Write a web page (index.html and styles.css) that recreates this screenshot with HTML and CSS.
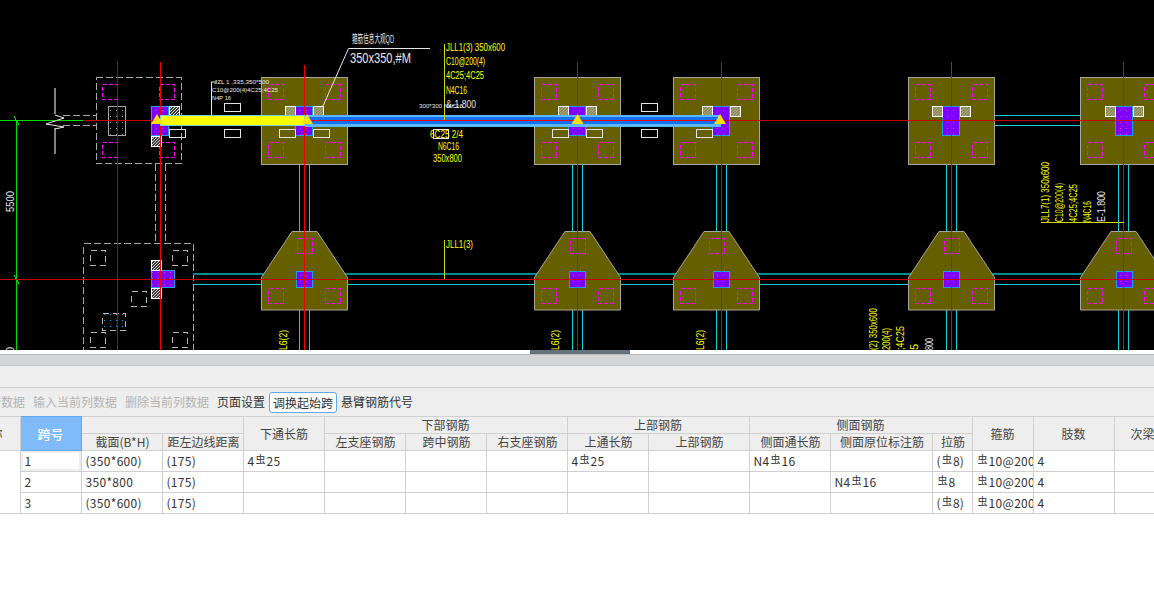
FILE: index.html
```html
<!DOCTYPE html>
<html lang="zh-CN">
<head>
<meta charset="utf-8">
<title>梁平法表格</title>
<link rel="stylesheet" href="styles.css">
</head>
<body>
<div class="cad">
<svg class="cad-svg" width="1154" height="350" viewBox="0 0 1154 350" xmlns="http://www.w3.org/2000/svg">
  <defs>
    <pattern id="hatch" width="3" height="3" patternUnits="userSpaceOnUse">
      <rect width="3" height="3" fill="#3a3a3a"/>
      <path d="M0 3L3 0" stroke="#d8d8d8" stroke-width="1"/>
    </pattern>
    <pattern id="hatchOlive" width="3" height="3" patternUnits="userSpaceOnUse">
      <rect width="3" height="3" fill="#77723a"/>
      <path d="M0 3L3 0" stroke="#dcdcc0" stroke-width="1"/>
    </pattern>
    <pattern id="dots" width="6" height="6" patternUnits="userSpaceOnUse">
      <rect width="6" height="6" fill="#8000ff"/>
      <rect x="2" y="2" width="1" height="1" fill="#d040e0"/>
    </pattern>
    <pattern id="grayDots" width="6" height="6" patternUnits="userSpaceOnUse">
      <rect x="2" y="2" width="1" height="1" fill="#a8a8a8"/>
    </pattern>
    <pattern id="cyanDots" width="6" height="6" patternUnits="userSpaceOnUse">
      <rect x="2" y="2" width="1" height="1" fill="#00a8e0"/>
    </pattern>
    <g id="piles4">
      <rect class="pile" x="-35.5" y="-35.5" width="15" height="15"/>
      <rect class="pile" x="21.5" y="-35.5" width="15" height="15"/>
      <rect class="pile" x="-35.5" y="22.5" width="15" height="15"/>
      <rect class="pile" x="21.5" y="22.5" width="15" height="15"/>
    </g>
    <g id="footSquare">
      <rect class="foot" x="-42.5" y="-42.5" width="86" height="87"/>
      <use href="#piles4"/>
    </g>
    <g id="footTrap">
      <polygon class="foot" points="-12,-47.5 13,-47.5 43.5,-1.5 43.5,31 -42.5,31 -42.5,-1.5"/>
      <rect class="pile" x="-6.5" y="-40.5" width="15" height="15"/>
      <rect class="pile" x="-35.5" y="9.5" width="15" height="15"/>
      <rect class="pile" x="21.5" y="9.5" width="15" height="15"/>
    </g>
    <g id="colSmall">
      <rect class="col" x="-7.5" y="-7.5" width="16" height="16" fill="url(#dots)"/>
    </g>
    <g id="colT">
      <rect class="col" x="-8.5" y="-13.5" width="17" height="29" fill="url(#dots)"/>
    </g>
    <g id="hatchPair">
      <rect class="hatch" x="-19" y="-14" width="10" height="10" fill="url(#hatchOlive)"/>
      <rect class="hatch" x="9" y="-14" width="10" height="10" fill="url(#hatchOlive)"/>
    </g>
    <polygon id="tri" class="tri" points="0,-6 6,4 -6,4"/>
  </defs>

  <!-- grid axes -->
  <line class="green" x1="0" y1="120.5" x2="83" y2="120.5"/>
  <line class="green" x1="16.5" y1="120" x2="16.5" y2="350"/>
  <line class="green" x1="13" y1="279.5" x2="94" y2="279.5"/>
  <line class="green" x1="14" y1="116.5" x2="19" y2="124.5"/>
  <line class="green" x1="14" y1="275.5" x2="19" y2="283.5"/>

  <!-- break symbol -->
  <line class="gray" x1="54.5" y1="88" x2="54.5" y2="114"/>
  <line class="gray" x1="54.5" y1="128" x2="54.5" y2="154"/>
  <polyline class="white" points="55,115 64,118 46,124 64,127 55,129"/>
  <line class="ghost" x1="63" y1="115.5" x2="96" y2="115.5"/>
  <line class="ghost" x1="63" y1="125.5" x2="96" y2="125.5"/>

  <!-- ghost footing, upper -->
  <rect class="ghost" x="96" y="77.5" width="85" height="86"/>
  <use href="#piles4" x="138" y="120"/>
  <rect class="thin" x="108.5" y="106.5" width="17" height="29"/>
  <rect x="108" y="106" width="17" height="29" fill="url(#grayDots)"/>
  <line class="ghost" x1="155.5" y1="164" x2="155.5" y2="243"/>
  <line class="ghost" x1="165.5" y1="164" x2="165.5" y2="243"/>

  <!-- ghost footing, lower -->
  <rect class="ghost" x="83.5" y="243.5" width="110" height="120"/>
  <rect class="bracket" x="90.5" y="250.5" width="15" height="15"/>
  <rect class="bracket" x="172.5" y="250.5" width="15" height="15"/>
  <rect class="bracket" x="90.5" y="332.5" width="15" height="15"/>
  <rect class="bracket" x="172.5" y="332.5" width="15" height="15"/>
  <rect class="bracket" x="131.5" y="291.5" width="15" height="15"/>
  <rect class="bracket" x="102.5" y="313.5" width="23" height="17"/>
  <rect x="103" y="314" width="22" height="16" fill="url(#cyanDots)"/>

  <!-- beams -->
  <g class="beam">
    <line x1="299.5" y1="164" x2="299.5" y2="350"/><line x1="309.5" y1="164" x2="309.5" y2="350"/>
    <line x1="572.5" y1="164" x2="572.5" y2="350"/><line x1="582.5" y1="164" x2="582.5" y2="350"/>
    <line x1="716.5" y1="164" x2="716.5" y2="350"/><line x1="726.5" y1="164" x2="726.5" y2="350"/>
    <line x1="946.5" y1="164" x2="946.5" y2="350"/><line x1="956.5" y1="164" x2="956.5" y2="350"/>
    <line x1="1118.5" y1="164" x2="1118.5" y2="350"/><line x1="1128.5" y1="164" x2="1128.5" y2="350"/>
    <line x1="994" y1="115.5" x2="1080" y2="115.5"/><line x1="994" y1="125.5" x2="1080" y2="125.5"/>
    <line x1="193" y1="284.5" x2="1154" y2="284.5"/>
  </g>
  <line class="teal" x1="193" y1="274" x2="1154" y2="274"/>

  <!-- footings -->
  <use href="#footSquare" x="304" y="120"/>
  <use href="#footSquare" x="577" y="120"/>
  <use href="#footSquare" x="716" y="120"/>
  <use href="#footSquare" x="951" y="120"/>
  <use href="#footSquare" x="1123" y="120"/>
  <use href="#footTrap" x="304" y="279"/>
  <use href="#footTrap" x="577" y="279"/>
  <use href="#footTrap" x="716" y="279"/>
  <use href="#footTrap" x="951" y="279"/>
  <use href="#footTrap" x="1123" y="279"/>

  <!-- columns -->
  <use href="#colT" x="160" y="120"/>
  <use href="#colT" x="304" y="120"/>
  <use href="#colT" x="577" y="120"/>
  <use href="#colT" x="721" y="120"/>
  <use href="#colT" x="951" y="120"/>
  <use href="#colT" x="1124" y="120"/>
  <rect class="col" x="151.5" y="270.5" width="23" height="17" fill="url(#dots)"/>
  <use href="#colSmall" x="304" y="279"/>
  <use href="#colSmall" x="577" y="279"/>
  <use href="#colSmall" x="721" y="279"/>
  <use href="#colSmall" x="951" y="279"/>
  <use href="#colSmall" x="1124" y="279"/>

  <!-- hatches -->
  <rect class="hatch" x="169.5" y="106.5" width="10" height="10" fill="url(#hatch)"/>
  <rect class="hatch" x="151.5" y="136.5" width="10" height="10" fill="url(#hatch)"/>
  <rect class="hatch" x="151.5" y="260.5" width="10" height="10" fill="url(#hatch)"/>
  <rect class="hatch" x="151.5" y="288.5" width="10" height="10" fill="url(#hatch)"/>
  <use href="#hatchPair" x="304.5" y="120.5"/>
  <use href="#hatchPair" x="577.5" y="120.5"/>
  <use href="#hatchPair" x="721.5" y="120.5"/>
  <use href="#hatchPair" x="951.5" y="120.5"/>
  <use href="#hatchPair" x="1124.5" y="120.5"/>

  <!-- small rectangles -->
  <g class="box">
    <rect x="224.5" y="103.5" width="16" height="8"/><rect x="224.5" y="129.5" width="16" height="8"/>
    <rect x="169.5" y="129.5" width="16" height="8"/>
    <rect x="279.5" y="129.5" width="16" height="8"/><rect x="313.5" y="129.5" width="16" height="8"/>
    <rect x="552.5" y="129.5" width="16" height="8"/><rect x="586.5" y="129.5" width="16" height="8"/>
    <rect x="641.5" y="103.5" width="16" height="8"/><rect x="641.5" y="129.5" width="16" height="8"/>
    <rect x="696.5" y="129.5" width="16" height="8"/>
  </g>

  <!-- red axes -->
  <line class="red" x1="83" y1="120.5" x2="1154" y2="120.5"/>
  <line class="red" x1="0" y1="279.5" x2="1154" y2="279.5"/>
  <line class="red-dark" x1="117.5" y1="62" x2="117.5" y2="350"/>
  <line class="red-bright" x1="160.5" y1="62" x2="160.5" y2="350"/>
  <line class="red-bright" x1="304.5" y1="65" x2="304.5" y2="350"/>
  <line class="red-bright" x1="577.5" y1="62" x2="577.5" y2="350"/>
  <line class="red-bright" x1="721.5" y1="62" x2="721.5" y2="350"/>
  <line class="red-bright" x1="951.5" y1="62" x2="951.5" y2="350"/>
  <line class="red-bright" x1="1123.5" y1="62" x2="1123.5" y2="350"/>

  <!-- selected beam -->
  <rect class="sel-beam" x="305" y="115" width="416" height="12"/>
  <rect class="sel-core" x="305" y="117" width="416" height="7"/>
  <line class="red-bright" x1="305" y1="120.5" x2="721" y2="120.5"/>
  <rect class="sel-yellow" x="160.5" y="115.5" width="144" height="10"/>
  <use href="#tri" x="157" y="120"/>
  <use href="#tri" x="307" y="120"/>
  <use href="#tri" x="577.5" y="120"/>
  <use href="#tri" x="720" y="120"/>

  <!-- leaders -->
  <polyline class="leader" points="323,106 348.5,48.5 430,48.5"/>
  <line class="yl" x1="444.5" y1="44" x2="444.5" y2="120"/>
  <line class="yl" x1="444.5" y1="240" x2="444.5" y2="279"/>
  <line class="yl" x1="1041" y1="222.5" x2="1124" y2="222.5"/>
  <polyline class="leader" points="211.5,115 211.5,82 216,82"/>
  <rect class="boxed" x="433.5" y="129.5" width="15" height="9"/>

  <!-- annotations -->
  <text class="t-white" x="352" y="43" font-size="11" textLength="42" lengthAdjust="spacingAndGlyphs">箍筋信息大观QD</text>
  <text class="t-white" x="350" y="63" font-size="15" textLength="61" lengthAdjust="spacingAndGlyphs">350x350,#M</text>

  <text class="t-yellow" x="446" y="51" font-size="11" textLength="59" lengthAdjust="spacingAndGlyphs">JLL1(3) 350x600</text>
  <text class="t-yellow" x="446" y="65" font-size="11" textLength="39" lengthAdjust="spacingAndGlyphs">C10@200(4)</text>
  <text class="t-yellow" x="446" y="79" font-size="11" textLength="38" lengthAdjust="spacingAndGlyphs">4C25;4C25</text>
  <text class="t-yellow" x="446" y="94" font-size="11" textLength="21" lengthAdjust="spacingAndGlyphs">N4C16</text>
  <text class="t-white" x="446" y="108" font-size="11" textLength="30" lengthAdjust="spacingAndGlyphs">&amp;-1.800</text>
  <text class="t-white" x="419" y="108" font-size="6" textLength="44" lengthAdjust="spacingAndGlyphs">300*300 N4C16</text>

  <text class="t-yellow" x="430" y="138" font-size="11" textLength="33" lengthAdjust="spacingAndGlyphs">6C25 2/4</text>
  <text class="t-yellow" x="438" y="150" font-size="11" textLength="21" lengthAdjust="spacingAndGlyphs">N6C16</text>
  <text class="t-yellow" x="433" y="162" font-size="11" textLength="29" lengthAdjust="spacingAndGlyphs">350x800</text>
  <text class="t-yellow" x="446" y="248" font-size="11" textLength="27" lengthAdjust="spacingAndGlyphs">JLL1(3)</text>

  <text class="t-white" x="214" y="84" font-size="6" textLength="55" lengthAdjust="spacingAndGlyphs">JZL 1 ,335,350*500</text>
  <text class="t-white" x="212" y="92" font-size="6" textLength="66" lengthAdjust="spacingAndGlyphs">C10@200(4)4C25;4C25</text>
  <text class="t-white" x="212" y="100" font-size="6" textLength="19" lengthAdjust="spacingAndGlyphs">N4P 16</text>

  <text class="t-white" transform="rotate(-90 14 212)" x="14" y="212" font-size="11" textLength="21" lengthAdjust="spacingAndGlyphs">5500</text>
  <text class="t-white" transform="rotate(-90 14 358)" x="14" y="358" font-size="10">50</text>

  <text class="t-yellow" transform="rotate(-90 1049 222)" x="1049" y="222" font-size="11" textLength="60" lengthAdjust="spacingAndGlyphs">JLL7(1) 350x600</text>
  <text class="t-yellow" transform="rotate(-90 1063 222)" x="1063" y="222" font-size="11" textLength="39" lengthAdjust="spacingAndGlyphs">C10@200(4)</text>
  <text class="t-yellow" transform="rotate(-90 1077 222)" x="1077" y="222" font-size="11" textLength="38" lengthAdjust="spacingAndGlyphs">4C25;4C25</text>
  <text class="t-yellow" transform="rotate(-90 1091 222)" x="1091" y="222" font-size="11" textLength="21" lengthAdjust="spacingAndGlyphs">N4C16</text>
  <text class="t-white" transform="rotate(-90 1105 222)" x="1105" y="222" font-size="11" textLength="31" lengthAdjust="spacingAndGlyphs">E-1.800</text>

  <text class="t-yellow" transform="rotate(-90 287 350)" x="287" y="350" font-size="11" textLength="20" lengthAdjust="spacingAndGlyphs">L6(2)</text>
  <text class="t-yellow" transform="rotate(-90 559 350)" x="559" y="350" font-size="11" textLength="20" lengthAdjust="spacingAndGlyphs">L6(2)</text>
  <text class="t-yellow" transform="rotate(-90 704 350)" x="704" y="350" font-size="11" textLength="20" lengthAdjust="spacingAndGlyphs">L6(2)</text>
  <text class="t-yellow" transform="rotate(-90 877 350)" x="877" y="350" font-size="11" textLength="42" lengthAdjust="spacingAndGlyphs">(2) 350x600</text>
  <text class="t-yellow" transform="rotate(-90 890 350)" x="890" y="350" font-size="11" textLength="22" lengthAdjust="spacingAndGlyphs">200(4)</text>
  <text class="t-yellow" transform="rotate(-90 904 350)" x="904" y="350" font-size="11" textLength="24" lengthAdjust="spacingAndGlyphs">;4C25</text>
  <text class="t-yellow" transform="rotate(-90 918 350)" x="918" y="350" font-size="11">5</text>
  <text class="t-white" transform="rotate(-90 933 350)" x="933" y="350" font-size="11" textLength="12" lengthAdjust="spacingAndGlyphs">800</text>
</svg>
</div>

<div class="splitter"><div class="handle"></div></div>
<div class="band"></div>
<div class="band-light"></div>

<div class="toolbar">
  <span class="tool off">删除当前行数据</span>
  <span class="tool off">输入当前列数据</span>
  <span class="tool off">删除当前列数据</span>
  <span class="tool">页面设置</span>
  <span class="tool active">调换起始跨</span>
  <span class="tool">悬臂钢筋代号</span>
</div>

<table class="grid">
  <colgroup>
    <col class="w80"><col class="w61"><col class="w81"><col class="w81"><col class="w81"><col class="w81"><col class="w81"><col class="w81">
    <col class="w81"><col class="w101"><col class="w81"><col class="w102"><col class="w40"><col class="w61"><col class="w81"><col class="w81">
  </colgroup>
  <thead>
    <tr>
      <th rowspan="2" class="first"><span class="cutoff">称</span></th>
      <th rowspan="2" class="span-head">跨号</th>
      <th colspan="2"></th>
      <th rowspan="2" class="nudge">下通长筋</th>
      <th colspan="3">下部钢筋</th>
      <th colspan="2">上部钢筋</th>
      <th colspan="3">侧面钢筋</th>
      <th rowspan="2">箍筋</th>
      <th rowspan="2">肢数</th>
      <th rowspan="2">次梁加筋</th>
    </tr>
    <tr class="sub">
      <th>截面(B*H)</th>
      <th>距左边线距离</th>
      <th>左支座钢筋</th>
      <th>跨中钢筋</th>
      <th>右支座钢筋</th>
      <th>上通长筋</th>
      <th>上部钢筋</th>
      <th>侧面通长筋</th>
      <th>侧面原位标注筋</th>
      <th>拉筋</th>
    </tr>
  </thead>
  <tbody>
    <tr>
      <td rowspan="3" class="first"></td>
      <td class="selected">1</td><td>(350*600)</td><td>(175)</td>
      <td>4<span class="bar">虫</span>25</td><td></td><td></td><td></td>
      <td>4<span class="bar">虫</span>25</td><td></td>
      <td>N4<span class="bar">虫</span>16</td><td></td><td>(<span class="bar">虫</span>8)</td>
      <td><span class="bar">虫</span>10@200</td><td>4</td><td></td>
    </tr>
    <tr>
      <td>2</td><td>350*800</td><td>(175)</td>
      <td></td><td></td><td></td><td></td><td></td><td></td><td></td>
      <td>N4<span class="bar">虫</span>16</td><td><span class="bar">虫</span>8</td>
      <td><span class="bar">虫</span>10@200</td><td>4</td><td></td>
    </tr>
    <tr>
      <td>3</td><td>(350*600)</td><td>(175)</td>
      <td></td><td></td><td></td><td></td><td></td><td></td><td></td><td></td>
      <td>(<span class="bar">虫</span>8)</td>
      <td><span class="bar">虫</span>10@200</td><td>4</td><td></td>
    </tr>
  </tbody>
</table>
</body>
</html>
```
FILE: styles.css
```css
* { box-sizing: border-box; }
html, body { margin: 0; padding: 0; }
body {
  width: 1154px;
  height: 592px;
  overflow: hidden;
  background: #fff;
  font-family: "Noto Sans CJK SC", "Noto Sans", sans-serif;
  font-size: 12px;
  color: #333;
}

/* CAD canvas */
.cad { height: 350px; background: #000; overflow: hidden; }
.cad-svg { display: block; shape-rendering: crispEdges; }
.cad-svg polyline { fill: none; }
.green { stroke: #00e000; }
.gray { stroke: #808080; stroke-width: 2; }
.white { stroke: #e8e8e8; shape-rendering: auto; }
.ghost { stroke: #a8a8a8; stroke-dasharray: 7 3; fill: none; }
.thin { stroke: #a8a8a8; fill: none; }
.bracket { stroke: #b8b8b8; stroke-dasharray: 6 4; fill: none; }
.pile { stroke: #ff00ff; stroke-dasharray: 4 2; fill: none; }
.foot { fill: #665f00; stroke: #a8a8a0; shape-rendering: auto; }
.col { stroke: #1aa0e8; }
.hatch { stroke: #fff; }
.box rect { stroke: #e4e4e4; fill: none; }
.beam line { stroke: #10d0d8; }
.teal { stroke: #008b8b; stroke-width: 2; }
.red { stroke: #c80000; }
.red-dark { stroke: #c00000; }
.red-bright { stroke: #f00000; }
.sel-beam { fill: #5ab8ff; }
.sel-core { fill: #1470ee; }
.sel-yellow { fill: #ffff00; stroke: #70d0e0; }
.tri { fill: #ffe000; stroke: none; shape-rendering: auto; }
.leader { stroke: #e8e8e8; shape-rendering: auto; }
.yl { stroke: #d8d800; }
.boxed { stroke: #e8e8e8; fill: none; }
.t-yellow, .t-white {
  font-family: "Liberation Sans", "Noto Sans CJK SC", sans-serif;
}
.t-yellow { fill: #ffff00; }
.t-white { fill: #e8e8e8; }

/* splitter and empty bars */
.splitter { height: 5px; background: #fff; border-bottom: 1px solid #b9bac0; padding-left: 530px; }
.handle { width: 100px; height: 4px; background: #66727c; }
.band { height: 11px; background: #d4d5d9; border-bottom: 1px solid #bfc0c5; }
.band-light { height: 22px; background: #eee; border-bottom: 1px solid #cfcfd1; }

/* toolbar */
.toolbar {
  display: flex;
  align-items: center;
  gap: 8px;
  height: 28px;
  margin-left: -59px;
  background: #eee;
  white-space: nowrap;
  line-height: 18px;
}
.tool { color: #333; flex: none; }
.off { color: #b4b4b4; }
.active {
  margin: 0 -4px;
  padding: 0 3px;
  height: 21px;
  line-height: 19px;
  background: #fff;
  border: 1px solid #62a8ee;
  border-radius: 3px;
}

/* table */
.grid {
  table-layout: fixed;
  border-collapse: collapse;
  width: 1255px;
  margin-left: -60px;
  font-size: 12px;
}
.w80 { width: 80px; }
.w61 { width: 61px; }
.w81 { width: 81px; }
.w101 { width: 101px; }
.w102 { width: 102px; }
.w40 { width: 40px; }
.grid th, .grid td {
  border: 1px solid #d0d0d0;
  padding: 0;
  overflow: hidden;
  white-space: nowrap;
}
.grid th {
  height: 17px;
  line-height: 16px;
  background: #eee;
  color: #444;
  font-weight: 400;
  text-align: center;
}
.grid .sub th { padding-left: 2px; }
.grid .nudge { padding-left: 1px; }
.grid td {
  height: 21px;
  line-height: 19px;
  padding-left: 4px;
  letter-spacing: .3px;
  vertical-align: top;
  color: #333;
  background: #fff;
}
.grid .first { border-left: 0; text-align: right; padding: 0; }
.grid tbody .first { border-right: 1px solid #d0d0d0; }
.cutoff { display: inline-block; margin-right: 17px; }
.grid .span-head {
  background: #7fbafa;
  border: 1px solid #62a8ee;
  color: #fff;
  font-size: 13px;
  font-weight: 500;
}
.grid .selected { box-shadow: inset 0 0 0 2px #eee; }
.bar {
  font-size: 10px;
  line-height: 10px;
  vertical-align: 3px;
  margin: 0 1px;
  letter-spacing: 0;
}
```
